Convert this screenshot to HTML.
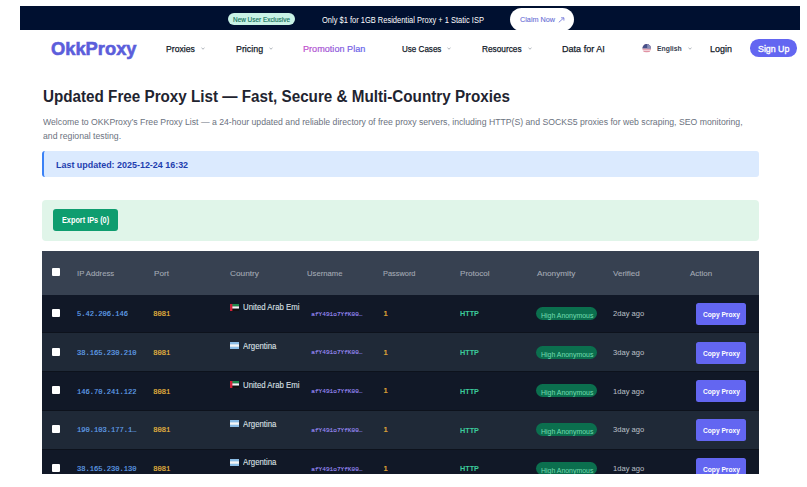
<!DOCTYPE html>
<html><head><meta charset="utf-8"><style>
html,body{margin:0;padding:0;background:#fff;width:807px;height:487px;overflow:hidden;position:relative}
.t{position:absolute;white-space:nowrap;transform-origin:0 0}
.s{font-family:"Liberation Sans", sans-serif}
.m{font-family:"Liberation Mono", monospace}
.r{position:absolute}
</style></head><body>
<div class="r" style="left:20.00px;top:6.00px;width:780.00px;height:24.00px;background:#001030;"></div>
<div class="r" style="left:227.70px;top:13.00px;width:67.30px;height:12.00px;background:#c9f3e6;border-radius:6px"></div>
<div class="t s" style="left:233.00px;top:16.76px;font-size:6.9px;line-height:6.9px;color:#13705a;font-weight:normal;-webkit-text-stroke:0.15px #13705a;transform:scaleX(0.9304);">New User Exclusive</div>
<div class="t s" style="left:321.60px;top:15.60px;font-size:8.5px;line-height:8.5px;color:#ffffff;font-weight:normal;transform:scaleX(0.8821);">Only $1 for 1GB Residential Proxy + 1 Static ISP</div>
<div class="r" style="left:510.30px;top:8.10px;width:63.50px;height:23.00px;background:#ffffff;border-radius:11.5px"></div>
<div class="t s" style="left:519.50px;top:15.97px;font-size:7.6px;line-height:7.6px;color:#6a6fd6;font-weight:normal;-webkit-text-stroke:0.1px #6a6fd6;transform:scaleX(0.9559);">Claim Now</div>
<svg class="r" style="left:558px;top:16.6px" width="7" height="6" viewBox="0 0 7 6"><path d="M0.8 5.3 L5.8 0.9 M3 0.8 L5.9 0.8 L5.9 3.6" fill="none" stroke="#6a6fd6" stroke-width="0.8"/></svg>
<div class="t s" style="left:51.00px;top:40.02px;font-size:18.4px;line-height:18.4px;color:#5b5edb;font-weight:bold;-webkit-text-stroke:0.6px #5b5edb;transform:scaleX(0.9956);">OkkProxy</div>
<div class="t s" style="left:166.20px;top:43.60px;font-size:9.8px;line-height:9.8px;color:#111827;font-weight:normal;-webkit-text-stroke:0.25px #111827;transform:scaleX(0.8815);">Proxies</div>
<svg class="r" style="left:200.5px;top:46.8px" width="4" height="3" viewBox="0 0 4 3"><path d="M0.5 0.8 L2 2.2 L3.5 0.8" fill="none" stroke="#8a9099" stroke-width="0.7"/></svg>
<div class="t s" style="left:235.50px;top:43.60px;font-size:9.8px;line-height:9.8px;color:#111827;font-weight:normal;-webkit-text-stroke:0.25px #111827;transform:scaleX(0.9047);">Pricing</div>
<svg class="r" style="left:268.5px;top:46.8px" width="4" height="3" viewBox="0 0 4 3"><path d="M0.5 0.8 L2 2.2 L3.5 0.8" fill="none" stroke="#8a9099" stroke-width="0.7"/></svg>
<div class="t s" style="left:303.10px;top:43.60px;font-size:9.8px;line-height:9.8px;color:#a855f7;font-weight:normal;transform:scaleX(0.9286);"><span style="color:#be50cd;-webkit-text-stroke:0.2px #be50cd">P</span><span style="color:#b752cf;-webkit-text-stroke:0.2px #b752cf">r</span><span style="color:#b053d2;-webkit-text-stroke:0.2px #b053d2">o</span><span style="color:#a955d4;-webkit-text-stroke:0.2px #a955d4">m</span><span style="color:#a256d6;-webkit-text-stroke:0.2px #a256d6">o</span><span style="color:#9b58d9;-webkit-text-stroke:0.2px #9b58d9">t</span><span style="color:#9459db;-webkit-text-stroke:0.2px #9459db">i</span><span style="color:#8e5bdd;-webkit-text-stroke:0.2px #8e5bdd">o</span><span style="color:#875cdf;-webkit-text-stroke:0.2px #875cdf">n</span><span style="color:#805ee2;-webkit-text-stroke:0.2px #805ee2"> </span><span style="color:#795fe4;-webkit-text-stroke:0.2px #795fe4">P</span><span style="color:#7261e6;-webkit-text-stroke:0.2px #7261e6">l</span><span style="color:#6b62e9;-webkit-text-stroke:0.2px #6b62e9">a</span><span style="color:#6464eb;-webkit-text-stroke:0.2px #6464eb">n</span></div>
<div class="t s" style="left:401.60px;top:43.60px;font-size:9.8px;line-height:9.8px;color:#111827;font-weight:normal;-webkit-text-stroke:0.25px #111827;transform:scaleX(0.8222);">Use Cases</div>
<svg class="r" style="left:446.5px;top:46.8px" width="4" height="3" viewBox="0 0 4 3"><path d="M0.5 0.8 L2 2.2 L3.5 0.8" fill="none" stroke="#8a9099" stroke-width="0.7"/></svg>
<div class="t s" style="left:481.60px;top:43.60px;font-size:9.8px;line-height:9.8px;color:#111827;font-weight:normal;-webkit-text-stroke:0.25px #111827;transform:scaleX(0.8456);">Resources</div>
<svg class="r" style="left:527.5px;top:46.8px" width="4" height="3" viewBox="0 0 4 3"><path d="M0.5 0.8 L2 2.2 L3.5 0.8" fill="none" stroke="#8a9099" stroke-width="0.7"/></svg>
<div class="t s" style="left:562.00px;top:43.60px;font-size:9.8px;line-height:9.8px;color:#111827;font-weight:normal;-webkit-text-stroke:0.25px #111827;transform:scaleX(0.9245);">Data for AI</div>
<svg class="r" style="left:642.4px;top:44.3px" width="9.4" height="9" viewBox="0 0 9 9"><defs><clipPath id="c"><circle cx="4.5" cy="4.5" r="4.4"/></clipPath></defs><g clip-path="url(#c)"><rect width="9" height="9" fill="#f4e4ea"/><rect y="0.2" width="9" height="1" fill="#d46a80"/><rect y="2.4" width="9" height="1" fill="#d46a80"/><rect y="4.6" width="9" height="1.1" fill="#e08a9c"/><rect y="6.8" width="9" height="1.1" fill="#e08a9c"/><rect width="9" height="4.4" fill="#46518a"/><rect x="5" width="4" height="4.4" fill="#8a8fb8"/></g></svg>
<div class="t s" style="left:657.10px;top:44.57px;font-size:7.6px;line-height:7.6px;color:#374151;font-weight:bold;transform:scaleX(0.9002);">English</div>
<svg class="r" style="left:688px;top:46.8px" width="4" height="3" viewBox="0 0 4 3"><path d="M0.5 0.8 L2 2.2 L3.5 0.8" fill="none" stroke="#8a9099" stroke-width="0.7"/></svg>
<div class="t s" style="left:710.40px;top:43.90px;font-size:9.8px;line-height:9.8px;color:#111827;font-weight:normal;-webkit-text-stroke:0.25px #111827;transform:scaleX(0.9131);">Login</div>
<div class="r" style="left:749.80px;top:39.10px;width:47.40px;height:17.60px;background:#6366f1;border-radius:8.8px"></div>
<div class="t s" style="left:757.80px;top:44.16px;font-size:9.5px;line-height:9.5px;color:#ffffff;font-weight:normal;-webkit-text-stroke:0.35px #fff;transform:scaleX(0.9287);">Sign Up</div>
<div class="t s" style="left:43.30px;top:88.69px;font-size:15.6px;line-height:15.6px;color:#1f2430;font-weight:bold;transform:scaleX(0.9761);">Updated Free Proxy List — Fast, Secure &amp; Multi-Country Proxies</div>
<div class="t s" style="left:42.80px;top:118.09px;font-size:8.4px;line-height:8.4px;color:#6b7280;font-weight:normal;transform:scaleX(1.0363);">Welcome to OKKProxy’s Free Proxy List — a 24-hour updated and reliable directory of free proxy servers, including HTTP(S) and SOCKS5 proxies for web scraping, SEO monitoring,</div>
<div class="t s" style="left:42.80px;top:132.29px;font-size:8.4px;line-height:8.4px;color:#6b7280;font-weight:normal;transform:scaleX(1.035);">and regional testing.</div>
<div class="r" style="left:42.40px;top:151.20px;width:716.60px;height:26.00px;background:#dbeafe;border-radius:3px;border-left:2px solid #3b82f6;box-sizing:border-box"></div>
<div class="t s" style="left:55.60px;top:159.62px;font-size:9.6px;line-height:9.6px;color:#1e40af;font-weight:bold;transform:scaleX(0.9313);">Last updated: 2025-12-24 16:32</div>
<div class="r" style="left:42.00px;top:199.80px;width:717.40px;height:41.00px;background:#e0f5e9;border-radius:4px"></div>
<div class="r" style="left:53.40px;top:208.70px;width:64.60px;height:22.30px;background:#0e9d6f;border-radius:3px"></div>
<div class="t s" style="left:62.30px;top:216.02px;font-size:8.6px;line-height:8.6px;color:#ffffff;font-weight:bold;transform:scaleX(0.8501);">Export IPs (0)</div>
<div class="r" style="left:42.00px;top:251.20px;width:717.00px;height:43.40px;background:#374151;"></div>
<div class="r" style="left:52.00px;top:267.50px;width:8.00px;height:8.00px;background:#ffffff;border-radius:1px"></div>
<div class="t s" style="left:76.80px;top:269.61px;font-size:7.9px;line-height:7.9px;color:#a3a9b4;font-weight:normal;-webkit-text-stroke:0.1px #a3a9b4;transform:scaleX(0.9785);">IP Address</div>
<div class="t s" style="left:153.50px;top:269.61px;font-size:7.9px;line-height:7.9px;color:#a3a9b4;font-weight:normal;-webkit-text-stroke:0.1px #a3a9b4;transform:scaleX(1.0287);">Port</div>
<div class="t s" style="left:229.60px;top:269.61px;font-size:7.9px;line-height:7.9px;color:#a3a9b4;font-weight:normal;-webkit-text-stroke:0.1px #a3a9b4;transform:scaleX(1.0492);">Country</div>
<div class="t s" style="left:306.60px;top:269.61px;font-size:7.9px;line-height:7.9px;color:#a3a9b4;font-weight:normal;-webkit-text-stroke:0.1px #a3a9b4;transform:scaleX(0.9724);">Username</div>
<div class="t s" style="left:383.40px;top:269.61px;font-size:7.9px;line-height:7.9px;color:#a3a9b4;font-weight:normal;-webkit-text-stroke:0.1px #a3a9b4;transform:scaleX(0.9378);">Password</div>
<div class="t s" style="left:459.60px;top:269.61px;font-size:7.9px;line-height:7.9px;color:#a3a9b4;font-weight:normal;-webkit-text-stroke:0.1px #a3a9b4;transform:scaleX(1.0223);">Protocol</div>
<div class="t s" style="left:536.60px;top:269.61px;font-size:7.9px;line-height:7.9px;color:#a3a9b4;font-weight:normal;-webkit-text-stroke:0.1px #a3a9b4;transform:scaleX(1.0395);">Anonymity</div>
<div class="t s" style="left:613.10px;top:269.61px;font-size:7.9px;line-height:7.9px;color:#a3a9b4;font-weight:normal;-webkit-text-stroke:0.1px #a3a9b4;transform:scaleX(1.0179);">Verified</div>
<div class="t s" style="left:689.70px;top:269.61px;font-size:7.9px;line-height:7.9px;color:#a3a9b4;font-weight:normal;-webkit-text-stroke:0.1px #a3a9b4;transform:scaleX(1.0074);">Action</div>
<div class="r" style="left:42px;top:294.59999999999997px;width:717px;height:179.40px;overflow:hidden">
<div class="r" style="left:0;top:0.00px;width:717px;height:38.75px;background:#111827"></div>
<div class="r" style="left:0;top:37.75px;width:717px;height:1px;background:#0d121c"></div>
<div class="r" style="left:10.00px;top:14.20px;width:8.00px;height:8.00px;background:#ffffff;border-radius:1px"></div>
<div class="t m" style="left:34.90px;top:16.46px;font-size:7.1px;line-height:7.1px;color:#64a4f0;font-weight:normal;-webkit-text-stroke:0.15px #64a4f0;">5.42.206.146</div>
<div class="t m" style="left:111.30px;top:16.46px;font-size:7.1px;line-height:7.1px;color:#f3c040;font-weight:normal;-webkit-text-stroke:0.15px #f3c040;">8081</div>
<svg class="r" style="left:187.6px;top:9.00px" width="9.5" height="7.1" viewBox="0 0 12 9"><rect width="12" height="3" fill="#1f8a4c"/><rect y="3" width="12" height="3" fill="#f5f5f5"/><rect y="6" width="12" height="3" fill="#111"/><rect width="3" height="9" fill="#d0213a"/></svg>
<div class="t s" style="left:201.40px;top:6.66px;font-size:8.2px;line-height:14px;color:#dde0e5;font-weight:normal;transform:scaleX(0.955);-webkit-text-stroke:0.1px #dde0e5;width:59.6px;overflow:hidden;">United Arab Emi</div>
<div class="t m" style="left:269.30px;top:16.92px;font-size:6.1px;line-height:6.1px;color:#9d8cf8;font-weight:normal;-webkit-text-stroke:0.1px #9d8cf8;">afY491o7YfK00…</div>
<div class="t s" style="left:341.60px;top:15.38px;font-size:7.7px;line-height:7.7px;color:#f2b53a;font-weight:normal;-webkit-text-stroke:0.2px #f2b53a;">1</div>
<div class="t s" style="left:418.00px;top:15.70px;font-size:7.8px;line-height:7.8px;color:#3ccb9c;font-weight:bold;transform:scaleX(0.9283);">HTTP</div>
<div class="r" style="left:494.40px;top:12.20px;width:61.10px;height:13.10px;background:#0b6f4e;border-radius:6.5px"></div>
<div class="t s" style="left:499.00px;top:18.33px;font-size:6.93px;line-height:6.93px;color:#72dcb0;font-weight:normal;transform:scaleX(1.0011);">High Anonymous</div>
<div class="t s" style="left:571.00px;top:15.48px;font-size:7.7px;line-height:7.7px;color:#bcc0c8;font-weight:normal;transform:scaleX(0.9861);">2day ago</div>
<div class="r" style="left:654.00px;top:8.40px;width:50.10px;height:21.80px;background:#6366f1;border-radius:2.5px"></div>
<div class="t s" style="left:660.60px;top:16.37px;font-size:7.6px;line-height:7.6px;color:#ffffff;font-weight:bold;transform:scaleX(0.8743);">Copy Proxy</div>
<div class="r" style="left:0;top:38.75px;width:717px;height:38.75px;background:#1f2937"></div>
<div class="r" style="left:0;top:76.50px;width:717px;height:1px;background:#0d121c"></div>
<div class="r" style="left:10.00px;top:52.95px;width:8.00px;height:8.00px;background:#ffffff;border-radius:1px"></div>
<div class="t m" style="left:34.90px;top:55.21px;font-size:7.1px;line-height:7.1px;color:#64a4f0;font-weight:normal;-webkit-text-stroke:0.15px #64a4f0;">38.165.230.210</div>
<div class="t m" style="left:111.30px;top:55.21px;font-size:7.1px;line-height:7.1px;color:#f3c040;font-weight:normal;-webkit-text-stroke:0.15px #f3c040;">8081</div>
<svg class="r" style="left:187.6px;top:47.75px" width="9.5" height="7.1" viewBox="0 0 12 9"><rect width="12" height="9" fill="#8bbde6"/><rect y="3" width="12" height="3" fill="#f5f5f5"/></svg>
<div class="t s" style="left:201.40px;top:45.41px;font-size:8.2px;line-height:14px;color:#dde0e5;font-weight:normal;transform:scaleX(0.955);-webkit-text-stroke:0.1px #dde0e5;width:59.6px;overflow:hidden;">Argentina</div>
<div class="t m" style="left:269.30px;top:55.67px;font-size:6.1px;line-height:6.1px;color:#9d8cf8;font-weight:normal;-webkit-text-stroke:0.1px #9d8cf8;">afY491o7YfK00…</div>
<div class="t s" style="left:341.60px;top:54.13px;font-size:7.7px;line-height:7.7px;color:#f2b53a;font-weight:normal;-webkit-text-stroke:0.2px #f2b53a;">1</div>
<div class="t s" style="left:418.00px;top:54.45px;font-size:7.8px;line-height:7.8px;color:#3ccb9c;font-weight:bold;transform:scaleX(0.9283);">HTTP</div>
<div class="r" style="left:494.40px;top:50.95px;width:61.10px;height:13.10px;background:#0b6f4e;border-radius:6.5px"></div>
<div class="t s" style="left:499.00px;top:57.08px;font-size:6.93px;line-height:6.93px;color:#72dcb0;font-weight:normal;transform:scaleX(1.0011);">High Anonymous</div>
<div class="t s" style="left:571.00px;top:54.23px;font-size:7.7px;line-height:7.7px;color:#bcc0c8;font-weight:normal;transform:scaleX(0.9861);">3day ago</div>
<div class="r" style="left:654.00px;top:47.15px;width:50.10px;height:21.80px;background:#6366f1;border-radius:2.5px"></div>
<div class="t s" style="left:660.60px;top:55.12px;font-size:7.6px;line-height:7.6px;color:#ffffff;font-weight:bold;transform:scaleX(0.8743);">Copy Proxy</div>
<div class="r" style="left:0;top:77.50px;width:717px;height:38.75px;background:#111827"></div>
<div class="r" style="left:0;top:115.25px;width:717px;height:1px;background:#0d121c"></div>
<div class="r" style="left:10.00px;top:91.70px;width:8.00px;height:8.00px;background:#ffffff;border-radius:1px"></div>
<div class="t m" style="left:34.90px;top:93.96px;font-size:7.1px;line-height:7.1px;color:#64a4f0;font-weight:normal;-webkit-text-stroke:0.15px #64a4f0;">146.70.241.122</div>
<div class="t m" style="left:111.30px;top:93.96px;font-size:7.1px;line-height:7.1px;color:#f3c040;font-weight:normal;-webkit-text-stroke:0.15px #f3c040;">8081</div>
<svg class="r" style="left:187.6px;top:86.50px" width="9.5" height="7.1" viewBox="0 0 12 9"><rect width="12" height="3" fill="#1f8a4c"/><rect y="3" width="12" height="3" fill="#f5f5f5"/><rect y="6" width="12" height="3" fill="#111"/><rect width="3" height="9" fill="#d0213a"/></svg>
<div class="t s" style="left:201.40px;top:84.16px;font-size:8.2px;line-height:14px;color:#dde0e5;font-weight:normal;transform:scaleX(0.955);-webkit-text-stroke:0.1px #dde0e5;width:59.6px;overflow:hidden;">United Arab Emi</div>
<div class="t m" style="left:269.30px;top:94.42px;font-size:6.1px;line-height:6.1px;color:#9d8cf8;font-weight:normal;-webkit-text-stroke:0.1px #9d8cf8;">afY491o7YfK00…</div>
<div class="t s" style="left:341.60px;top:92.88px;font-size:7.7px;line-height:7.7px;color:#f2b53a;font-weight:normal;-webkit-text-stroke:0.2px #f2b53a;">1</div>
<div class="t s" style="left:418.00px;top:93.20px;font-size:7.8px;line-height:7.8px;color:#3ccb9c;font-weight:bold;transform:scaleX(0.9283);">HTTP</div>
<div class="r" style="left:494.40px;top:89.70px;width:61.10px;height:13.10px;background:#0b6f4e;border-radius:6.5px"></div>
<div class="t s" style="left:499.00px;top:95.83px;font-size:6.93px;line-height:6.93px;color:#72dcb0;font-weight:normal;transform:scaleX(1.0011);">High Anonymous</div>
<div class="t s" style="left:571.00px;top:92.98px;font-size:7.7px;line-height:7.7px;color:#bcc0c8;font-weight:normal;transform:scaleX(0.9861);">1day ago</div>
<div class="r" style="left:654.00px;top:85.90px;width:50.10px;height:21.80px;background:#6366f1;border-radius:2.5px"></div>
<div class="t s" style="left:660.60px;top:93.87px;font-size:7.6px;line-height:7.6px;color:#ffffff;font-weight:bold;transform:scaleX(0.8743);">Copy Proxy</div>
<div class="r" style="left:0;top:116.25px;width:717px;height:38.75px;background:#1f2937"></div>
<div class="r" style="left:0;top:154.00px;width:717px;height:1px;background:#0d121c"></div>
<div class="r" style="left:10.00px;top:130.45px;width:8.00px;height:8.00px;background:#ffffff;border-radius:1px"></div>
<div class="t m" style="left:34.90px;top:132.71px;font-size:7.1px;line-height:7.1px;color:#64a4f0;font-weight:normal;-webkit-text-stroke:0.15px #64a4f0;">190.103.177.1…</div>
<div class="t m" style="left:111.30px;top:132.71px;font-size:7.1px;line-height:7.1px;color:#f3c040;font-weight:normal;-webkit-text-stroke:0.15px #f3c040;">8081</div>
<svg class="r" style="left:187.6px;top:125.25px" width="9.5" height="7.1" viewBox="0 0 12 9"><rect width="12" height="9" fill="#8bbde6"/><rect y="3" width="12" height="3" fill="#f5f5f5"/></svg>
<div class="t s" style="left:201.40px;top:122.91px;font-size:8.2px;line-height:14px;color:#dde0e5;font-weight:normal;transform:scaleX(0.955);-webkit-text-stroke:0.1px #dde0e5;width:59.6px;overflow:hidden;">Argentina</div>
<div class="t m" style="left:269.30px;top:133.17px;font-size:6.1px;line-height:6.1px;color:#9d8cf8;font-weight:normal;-webkit-text-stroke:0.1px #9d8cf8;">afY491o7YfK00…</div>
<div class="t s" style="left:341.60px;top:131.63px;font-size:7.7px;line-height:7.7px;color:#f2b53a;font-weight:normal;-webkit-text-stroke:0.2px #f2b53a;">1</div>
<div class="t s" style="left:418.00px;top:131.95px;font-size:7.8px;line-height:7.8px;color:#3ccb9c;font-weight:bold;transform:scaleX(0.9283);">HTTP</div>
<div class="r" style="left:494.40px;top:128.45px;width:61.10px;height:13.10px;background:#0b6f4e;border-radius:6.5px"></div>
<div class="t s" style="left:499.00px;top:134.58px;font-size:6.93px;line-height:6.93px;color:#72dcb0;font-weight:normal;transform:scaleX(1.0011);">High Anonymous</div>
<div class="t s" style="left:571.00px;top:131.73px;font-size:7.7px;line-height:7.7px;color:#bcc0c8;font-weight:normal;transform:scaleX(0.9861);">3day ago</div>
<div class="r" style="left:654.00px;top:124.65px;width:50.10px;height:21.80px;background:#6366f1;border-radius:2.5px"></div>
<div class="t s" style="left:660.60px;top:132.62px;font-size:7.6px;line-height:7.6px;color:#ffffff;font-weight:bold;transform:scaleX(0.8743);">Copy Proxy</div>
<div class="r" style="left:0;top:155.00px;width:717px;height:38.75px;background:#111827"></div>
<div class="r" style="left:0;top:192.75px;width:717px;height:1px;background:#0d121c"></div>
<div class="r" style="left:10.00px;top:169.20px;width:8.00px;height:8.00px;background:#ffffff;border-radius:1px"></div>
<div class="t m" style="left:34.90px;top:171.46px;font-size:7.1px;line-height:7.1px;color:#64a4f0;font-weight:normal;-webkit-text-stroke:0.15px #64a4f0;">38.165.230.130</div>
<div class="t m" style="left:111.30px;top:171.46px;font-size:7.1px;line-height:7.1px;color:#f3c040;font-weight:normal;-webkit-text-stroke:0.15px #f3c040;">8081</div>
<svg class="r" style="left:187.6px;top:164.00px" width="9.5" height="7.1" viewBox="0 0 12 9"><rect width="12" height="9" fill="#8bbde6"/><rect y="3" width="12" height="3" fill="#f5f5f5"/></svg>
<div class="t s" style="left:201.40px;top:161.66px;font-size:8.2px;line-height:14px;color:#dde0e5;font-weight:normal;transform:scaleX(0.955);-webkit-text-stroke:0.1px #dde0e5;width:59.6px;overflow:hidden;">Argentina</div>
<div class="t m" style="left:269.30px;top:171.92px;font-size:6.1px;line-height:6.1px;color:#9d8cf8;font-weight:normal;-webkit-text-stroke:0.1px #9d8cf8;">afY491o7YfK00…</div>
<div class="t s" style="left:341.60px;top:170.38px;font-size:7.7px;line-height:7.7px;color:#f2b53a;font-weight:normal;-webkit-text-stroke:0.2px #f2b53a;">1</div>
<div class="t s" style="left:418.00px;top:170.70px;font-size:7.8px;line-height:7.8px;color:#3ccb9c;font-weight:bold;transform:scaleX(0.9283);">HTTP</div>
<div class="r" style="left:494.40px;top:167.20px;width:61.10px;height:13.10px;background:#0b6f4e;border-radius:6.5px"></div>
<div class="t s" style="left:499.00px;top:173.33px;font-size:6.93px;line-height:6.93px;color:#72dcb0;font-weight:normal;transform:scaleX(1.0011);">High Anonymous</div>
<div class="t s" style="left:571.00px;top:170.48px;font-size:7.7px;line-height:7.7px;color:#bcc0c8;font-weight:normal;transform:scaleX(0.9861);">1day ago</div>
<div class="r" style="left:654.00px;top:163.40px;width:50.10px;height:21.80px;background:#6366f1;border-radius:2.5px"></div>
<div class="t s" style="left:660.60px;top:171.37px;font-size:7.6px;line-height:7.6px;color:#ffffff;font-weight:bold;transform:scaleX(0.8743);">Copy Proxy</div>
</div>
</body></html>
